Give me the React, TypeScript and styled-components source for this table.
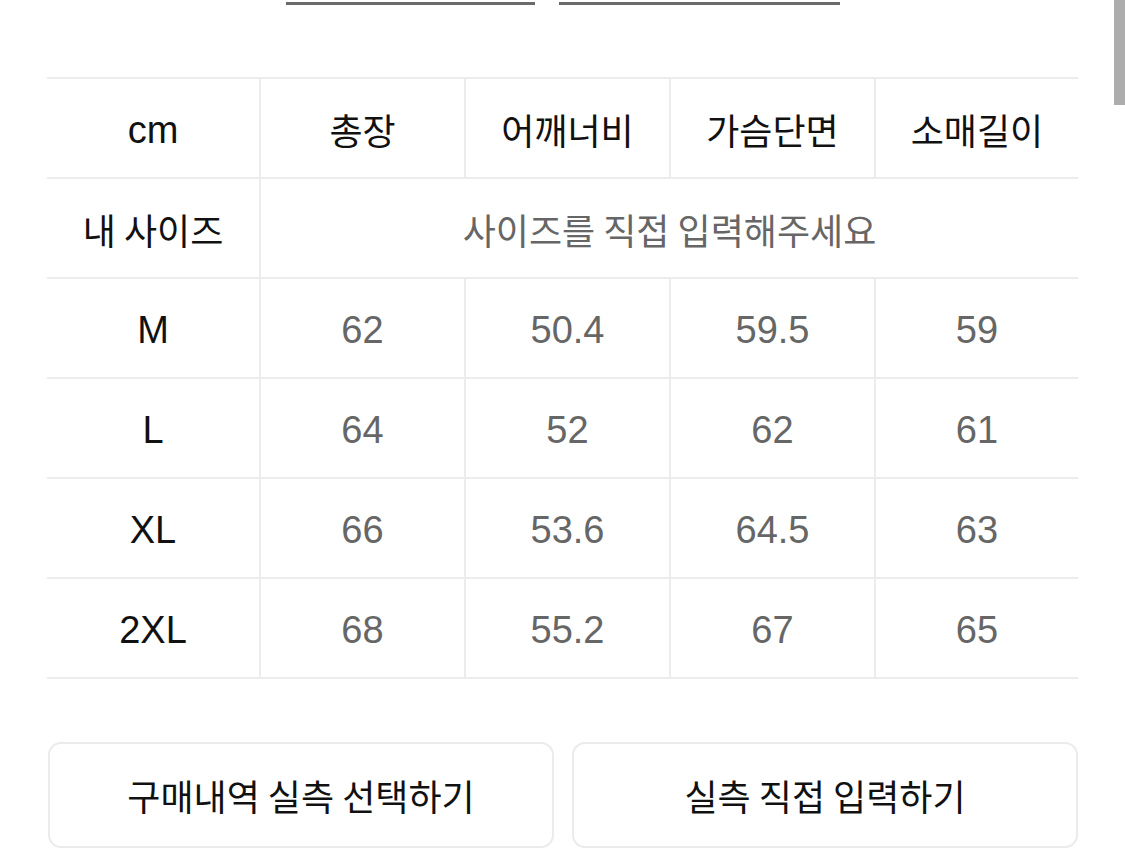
import React from "react";
import styled, { createGlobalStyle } from "styled-components";

const Global = createGlobalStyle`
  html, body { margin: 0; padding: 0; background: #fff; }
  body { font-family: "Liberation Sans", "Noto Sans CJK KR", sans-serif; overflow: hidden; }
`;

const Page = styled.div`
  position: relative;
  width: 1125px;
  height: 851px;
  padding: 0 47px;
  box-sizing: border-box;
  background: #fff;
`;

const TopBar = styled.div`
  display: flex;
  gap: 24px;
  padding: 2px 0 0 239px;
  height: 77px;
  box-sizing: border-box;
`;

const Underline = styled.div<{ $w: number }>`
  width: ${(p) => p.$w}px;
  height: 3px;
  background: #6a6a6a;
`;

const Scrollbar = styled.div`
  position: absolute;
  right: 0;
  top: 0;
  width: 11px;
  height: 105px;
  background: #adadad;
`;

const Table = styled.div`
  display: grid;
  grid-template-columns: 212px 205px 205px 205px 1fr;
  grid-auto-rows: 100px;
  border-bottom: 2px solid #ececec;
`;

const Cell = styled.div<{ $latin?: boolean; $muted?: boolean; $first?: boolean; $span?: number }>`
  display: flex;
  align-items: center;
  justify-content: center;
  border-top: 2px solid #ececec;
  border-left: ${(p) => (p.$first ? "none" : "2px solid #ececec")};
  grid-column: ${(p) => (p.$span ? `span ${p.$span}` : "auto")};
  font-family: ${(p) => (p.$latin ? '"Liberation Sans"' : '"Noto Sans CJK KR"')}, sans-serif;
  font-size: ${(p) => (p.$latin ? "38px" : "36px")};
  color: ${(p) => (p.$muted ? "#666" : "#111")};
  padding-top: ${(p) => (p.$latin ? "4px" : "2px")};
`;

const Buttons = styled.div`
  display: grid;
  grid-template-columns: 1fr 1fr;
  gap: 18px;
  margin-top: 63px;
  padding-left: 1px;
`;

const Button = styled.button`
  height: 106px;
  border: 2px solid #ebebeb;
  border-radius: 13px;
  background: #fff;
  font-family: "Noto Sans CJK KR", sans-serif;
  font-size: 36px;
  color: #111;
  padding: 0;
`;

const headers = ["총장", "어깨너비", "가슴단면", "소매길이"];
const rows: [string, string[]][] = [
  ["M", ["62", "50.4", "59.5", "59"]],
  ["L", ["64", "52", "62", "61"]],
  ["XL", ["66", "53.6", "64.5", "63"]],
  ["2XL", ["68", "55.2", "67", "65"]],
];

export default function App() {
  return (
    <Page>
      <Global />
      <Scrollbar />
      <TopBar>
        <Underline $w={249} />
        <Underline $w={281} />
      </TopBar>
      <Table>
        <Cell $first $latin>cm</Cell>
        {headers.map((h) => (
          <Cell key={h}>{h}</Cell>
        ))}
        <Cell $first>내 사이즈</Cell>
        <Cell $span={4} $muted>사이즈를 직접 입력해주세요</Cell>
        {rows.map(([size, vals]) => (
          <React.Fragment key={size}>
            <Cell $first $latin>{size}</Cell>
            {vals.map((v, i) => (
              <Cell key={i} $latin $muted>{v}</Cell>
            ))}
          </React.Fragment>
        ))}
      </Table>
      <Buttons>
        <Button>구매내역 실측 선택하기</Button>
        <Button>실측 직접 입력하기</Button>
      </Buttons>
    </Page>
  );
}
